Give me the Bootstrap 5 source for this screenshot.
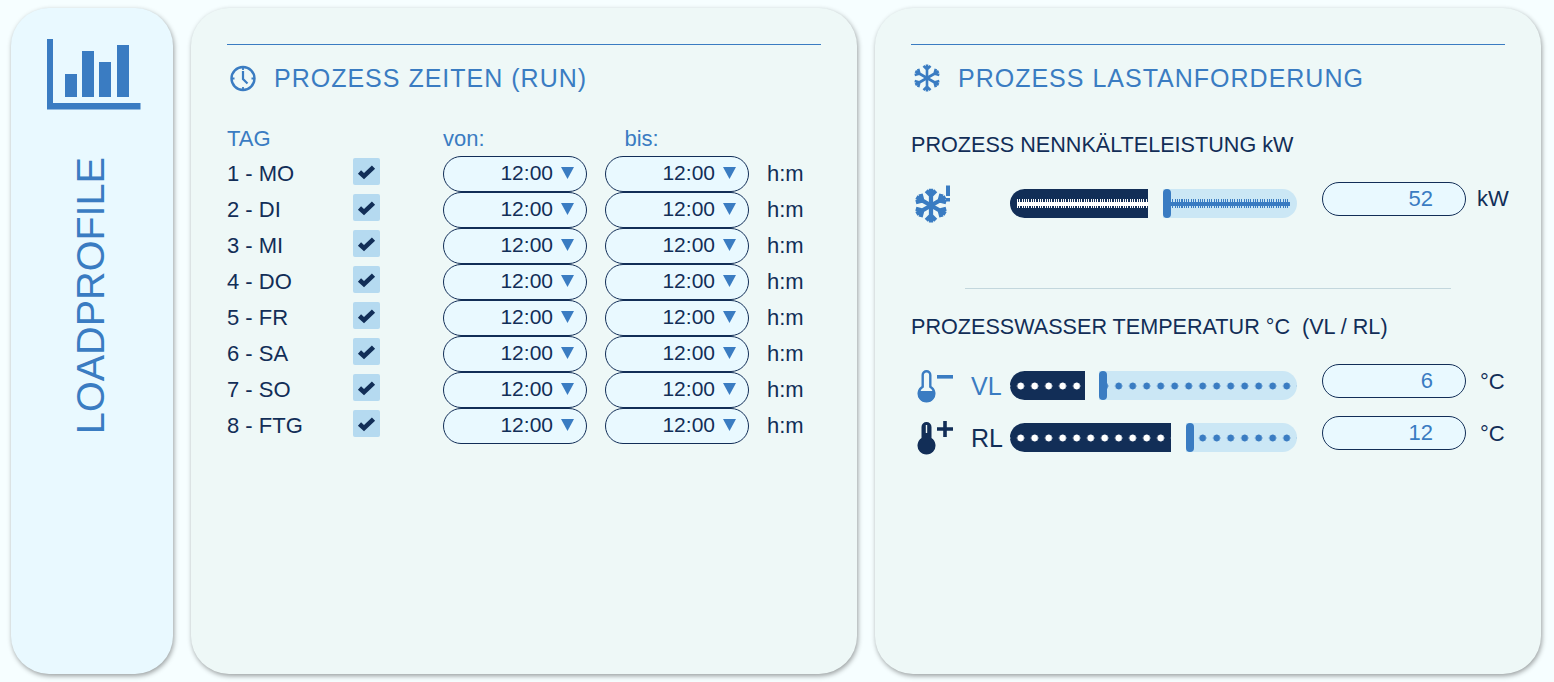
<!DOCTYPE html>
<html lang="de">
<head>
    <meta charset="UTF-8">
    <meta name="viewport" content="width=device-width, initial-scale=1.0">
    <title>Loadprofile</title>
    <link href="https://cdn.jsdelivr.net/npm/bootstrap@5.3.0/dist/css/bootstrap.min.css" rel="stylesheet">
    <style>
        :root {
            --lp-blue: #3a7cc2;
            --lp-navy: #122e57;
            --lp-track: #cbe7f5;
        }
        html, body { height: 100%; }
        body {
            background: #f6feff;
            color: var(--lp-navy);
            font-family: "Liberation Sans", Arial, sans-serif;
            font-size: 22px;
            overflow: hidden;
        }
        .page-wrap { padding: 8px 13px 8px 11px; gap: 18px; height: 682px; }
        .side-panel, .main-panel {
            border-radius: 38px;
            box-shadow: 1px 2px 5px rgba(0, 0, 0, .38);
        }
        .side-panel { width: 162px; background: #e9f9ff; padding-top: 31px; }
        .side-panel svg { margin-left: 4px; }
        .main-panel { width: 666px; background: #eef8f7; padding: 36px 36px 0; }
        .side-title {
            writing-mode: vertical-rl;
            transform: rotate(180deg);
            color: var(--lp-blue);
            font-size: 39.600px;
            line-height: 1;
            margin: 47px 2px 0 0;
        }
        .panel-head {
            border-top: 1px solid var(--lp-blue);
            padding-top: 5px;
            height: 62px;
            color: var(--lp-blue);
            font-size: 25px;
            line-height: 28px;
            letter-spacing: 1px;
        }
        .panel-head svg { margin-left: 3px; margin-right: 17px; }
        .panel-head svg.head-snow { margin-left: 2px; }
        .blue-text { color: var(--lp-blue); }
        .time-head { height: 50px; padding-top: 21px; line-height: 24px; }
        .col-day { width: 126px; }
        .time-row .col-day { padding-bottom: 2px; }
        .col-check { width: 90px; }
        .col-from { width: 181.500px; }
        .time-row { height: 36px; }
        .day-check.form-check-input:checked[type=checkbox] {
            width: 27px;
            height: 27px;
            margin: -5px 0 0;
            border: 0;
            border-radius: 2px;
            background-color: #b5daf0;
            background-image: url("data:image/svg+xml,%3Csvg xmlns='http://www.w3.org/2000/svg' viewBox='0 0 27 27'%3E%3Cpath d='M6.500 14l4.500 4.200 9.500-9' fill='none' stroke='%23122e57' stroke-width='4.600'/%3E%3C/svg%3E") !important;
            background-size: 27px 27px;
        }
        .time-select.form-select {
            width: 144px;
            height: 36px;
            padding: 0 33px 2px 0;
            border: 1px solid var(--lp-navy);
            border-radius: 18px;
            background-color: #e9f9ff;
            background-image: url("data:image/svg+xml,%3Csvg xmlns='http://www.w3.org/2000/svg' viewBox='0 0 13 12'%3E%3Cpath d='M0 0h13L6.500 12z' fill='%233a7cc2'/%3E%3C/svg%3E");
            background-position: right 12px top 10px;
            background-size: 13px 12px;
            color: var(--lp-navy);
            font-size: 21px;
            text-align-last: right;
            box-shadow: none;
        }
        .time-unit { margin-left: 18px; padding-bottom: 2px; }
        .load-heading { font-size: 21.600px; line-height: 24px; }
        .load-row { height: 34px; }
        .row-icon { width: 60px; flex-shrink: 0; }
        .thermo-icon { margin: 6px 1px 0 6px; }
        .row-tag { width: 39px; flex-shrink: 0; font-size: 25px; line-height: 34px; margin-top: 5px; }
        .value-box {
            flex-shrink: 0;
            width: 144px;
            height: 34px;
            margin-left: 25px;
            padding: 0 32px 0 0;
            border: 1px solid var(--lp-navy);
            border-radius: 17px;
            background: #e9f9ff;
            color: var(--lp-blue);
            line-height: 32px;
            text-align: right;
        }
        .value-unit { margin-left: 11px; line-height: 34px; white-space: nowrap; }
        .unit-temp { margin-left: 14px; line-height: 35px; }
        .range-track { flex-shrink: 0; width: 287px; height: 29px; margin-top: 7px; }
        .range-fill {
            background-color: var(--lp-navy);
            border-radius: 14.5px 0 0 14.5px;
            background-image: radial-gradient(circle, #fff 3.2px, transparent 3.800px);
            background-size: 14px 14px;
            background-position: 3.700px 7.500px;
            background-repeat: repeat-x;
        }
        .range-rest {
            border-radius: 0 14.5px 14.5px 0;
            background-color: var(--lp-track);
            background-image: radial-gradient(circle, var(--lp-blue) 3.2px, transparent 3.800px);
            background-size: 14px 14px;
            background-position: right 3.300px top 7.500px;
            background-repeat: repeat-x;
        }
        .range-thumb {
            position: absolute;
            left: 0;
            top: 0;
            width: 7.500px;
            height: 100%;
            border-radius: 4px;
            background: var(--lp-blue);
        }
        .track-fine .range-fill {
            background-image: linear-gradient(#fff, #fff), repeating-linear-gradient(90deg, #fff 0 1px, transparent 1px 2.300px);
            background-size: 100% 4px, 100% 9px;
            background-position: 7px center, 7px center;
            background-repeat: no-repeat;
        }
        .track-fine .range-rest {
            background-image: linear-gradient(var(--lp-blue), var(--lp-blue)), repeating-linear-gradient(90deg, var(--lp-blue) 0 1px, transparent 1px 2.300px);
            background-size: 120px 4px, 120px 9px;
            background-position: 7px center, 7px center;
            background-repeat: no-repeat;
        }
        .load-rule { width: 486px; height: 1px; background: #c3d7dd; margin: 0 0 26px 54px; }
    </style>
</head>
<body>

<svg width="0" height="0" class="position-absolute">
    <symbol id="snow" viewBox="0 0 28 28">
        <g fill="none" stroke="currentColor" stroke-width="2.600">
            <path id="snowArm" d="M14 14V.500M10.500 1.800l3.500 3.500 3.500-3.500"/>
            <use href="#snowArm" transform="rotate(60 14 14)"/>
            <use href="#snowArm" transform="rotate(120 14 14)"/>
            <use href="#snowArm" transform="rotate(180 14 14)"/>
            <use href="#snowArm" transform="rotate(240 14 14)"/>
            <use href="#snowArm" transform="rotate(300 14 14)"/>
        </g>
    </symbol>
    <symbol id="snowBold" viewBox="0 0 28 28">
        <g fill="none" stroke="currentColor" stroke-width="3.400">
            <path id="snowBoldArm" d="M14 14V.500M10.200 2.200l3.800 3.800 3.800-3.800"/>
            <use href="#snowBoldArm" transform="rotate(60 14 14)"/>
            <use href="#snowBoldArm" transform="rotate(120 14 14)"/>
            <use href="#snowBoldArm" transform="rotate(180 14 14)"/>
            <use href="#snowBoldArm" transform="rotate(240 14 14)"/>
            <use href="#snowBoldArm" transform="rotate(300 14 14)"/>
        </g>
    </symbol>
    <symbol id="thermo" viewBox="0 0 19 33">
        <path d="M9.500 1.200a3.800 3.800 0 0 1 3.800 3.800v11.800a7.800 7.800 0 1 1-7.600 0V5a3.800 3.800 0 0 1 3.800-3.800z" fill="none" stroke="currentColor" stroke-width="2.400"/>
        <path d="M1.400 21h16.200A8.500 8.500 0 1 1 1.400 21z" fill="currentColor"/>
    </symbol>
    <symbol id="thermoFull" viewBox="0 0 19 33">
        <path d="M9.500 0a5 5 0 0 1 5 5v11.100a9 9 0 1 1-10 0V5a5 5 0 0 1 5-5z" fill="currentColor"/>
        <path d="M8.800 3h1.400v8H8.800z" fill="#eef8f7"/>
    </symbol>
</svg>

<div class="page-wrap d-flex">
    <div class="side-panel d-flex flex-column align-items-center">
        <svg width="94" height="71" viewBox="0 0 94 71" fill="#3a7cc2">
            <path d="M0 0h6v64h87.500v6.500H0z"/>
            <path d="M18 35h12v23H18zM35 12h12v46H35zM52 23h12v35H52zM70 6h12v52H70z"/>
        </svg>
        <div class="side-title">LOADPROFILE</div>
    </div>

    <div class="main-panel">
        <div class="panel-head d-flex align-items-center">
            <svg width="27" height="27" viewBox="0 0 27 27" fill="none" stroke="#3a7cc2">
                <circle cx="13" cy="13.500" r="11.500" stroke-width="2.400"/>
                <path d="M13 6v8l4.500 4.500" stroke-width="2.200"/>
                <path d="M13 2v3M13 22v3M1.500 13.500h3M21.500 13.500h3" stroke-width="1.800"/>
            </svg>
            <span>PROZESS ZEITEN (RUN)</span>
        </div>
        <div class="time-head d-flex blue-text">
            <div class="col-day">TAG</div>
            <div class="col-check"></div>
            <div class="col-from">von:</div>
            <div>bis:</div>
        </div>
        <div id="timeRows"></div>
    </div>

    <div class="main-panel">
        <div class="panel-head d-flex align-items-center">
            <svg width="28" height="28" class="blue-text head-snow"><use href="#snow"/></svg>
            <span>PROZESS LASTANFORDERUNG</span>
        </div>
        <div class="load-heading" style="margin-top: 27px">PROZESS NENNKÄLTELEISTUNG kW</div>
        <div class="load-row d-flex" style="margin-top: 25px">
            <div class="row-icon blue-text">
                <svg width="40" height="42" viewBox="0 0 40 42">
                    <use href="#snowBold" x="2.500" y="6" width="35" height="35"/>
                    <path d="M35 3.500h4V14h-4zM35 16h4v3.500h-4z" fill="currentColor"/>
                </svg>
            </div>
            <div class="row-tag"></div>
            <div class="range-track track-fine d-flex">
                <div class="range-fill" style="width: 138px"></div>
                <div class="range-rest flex-grow-1 position-relative" style="margin-left: 15px"><span class="range-thumb"></span></div>
            </div>
            <div class="value-box">52</div>
            <div class="value-unit">kW</div>
        </div>
        <div class="load-rule" style="margin-top: 72px"></div>
        <div class="load-heading">PROZESSWASSER TEMPERATUR °C&nbsp; (VL / RL)</div>
        <div class="load-row d-flex" style="margin-top: 25px">
            <div class="row-icon blue-text d-flex">
                <svg width="19" height="33" class="thermo-icon"><use href="#thermo"/></svg>
                <svg width="16" height="15"><rect width="16" height="3.600" y="11" fill="currentColor"/></svg>
            </div>
            <div class="row-tag blue-text">VL</div>
            <div class="range-track d-flex">
                <div class="range-fill" style="width: 75px"></div>
                <div class="range-rest flex-grow-1 position-relative" style="margin-left: 14px"><span class="range-thumb"></span></div>
            </div>
            <div class="value-box">6</div>
            <div class="value-unit unit-temp">°C</div>
        </div>
        <div class="load-row d-flex" style="margin-top: 18px">
            <div class="row-icon d-flex">
                <svg width="19" height="33" class="thermo-icon"><use href="#thermoFull"/></svg>
                <svg width="16" height="21"><path d="M6.200 5h3.600v6.200H16v3.600H9.800V21H6.200v-6.200H0v-3.600h6.200z" fill="currentColor"/></svg>
            </div>
            <div class="row-tag">RL</div>
            <div class="range-track d-flex">
                <div class="range-fill" style="width: 161px"></div>
                <div class="range-rest flex-grow-1 position-relative" style="margin-left: 15px"><span class="range-thumb"></span></div>
            </div>
            <div class="value-box">12</div>
            <div class="value-unit unit-temp">°C</div>
        </div>
    </div>
</div>

<script src="https://cdn.jsdelivr.net/npm/bootstrap@5.3.0/dist/js/bootstrap.bundle.min.js"></script>
<script>
// the eight day rows are all the same
const days = ['1 - MO', '2 - DI', '3 - MI', '4 - DO', '5 - FR', '6 - SA', '7 - SO', '8 - FTG'];
const timeSelect = '<select class="form-select time-select"><option>12:00</option></select>';
document.getElementById('timeRows').innerHTML = days.map(day => `
    <div class="time-row d-flex align-items-center">
        <div class="col-day">${day}</div>
        <div class="col-check"><input class="form-check-input day-check d-block" type="checkbox" checked></div>
        ${timeSelect}
        <div style="width: 18px"></div>
        ${timeSelect}
        <div class="time-unit">h:m</div>
    </div>`).join('');
</script>

</body>
</html>
